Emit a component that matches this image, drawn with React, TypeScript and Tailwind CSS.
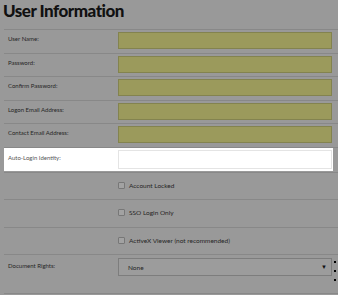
import React from "react";

const font = { fontFamily: "Lato, 'Open Sans', Arial, sans-serif" };

function InputRow({ label, h }: { label: string; h: string }) {
  return (
    <div className={`flex border-t border-[#888888] pl-[4px] ${h}`}>
      <div className="w-[110px] pt-[4px] text-[6px] leading-[9px] text-[#262626]">{label}</div>
      <div className="mt-[2px] h-[17px] w-[214px] border border-[#83834f] bg-[#9b9a5c]" />
    </div>
  );
}

function CheckRow({ label, h }: { label: string; h: string }) {
  return (
    <div className={`flex items-center border-t border-[#888888] pb-[2px] pl-[114px] ${h}`}>
      <div className="h-[7px] w-[7px] rounded-[1px] border border-[#777777] bg-[#a2a2a2]" />
      <span className="ml-[4px] text-[6.5px] leading-[9px] text-[#262626]">{label}</span>
    </div>
  );
}

export default function App() {
  return (
    <div className="h-[295px] w-[338px] overflow-hidden bg-[#999999]" style={font}>
      <div className="h-[29px] pl-[3px] pt-[1px] text-[17px] font-black leading-[20px] tracking-[-0.5px] text-[#111111]">
        User Information
      </div>
      <div className="pl-[4px]">
        <InputRow label="User Name:" h="h-[24px]" />
        <InputRow label="Password:" h="h-[23px]" />
        <InputRow label="Confirm Password:" h="h-[24px]" />
        <InputRow label="Logon Email Address:" h="h-[23px]" />
        <InputRow label="Contact Email Address:" h="h-[24px]" />
        <div className="border-t border-[#888888]">
          <div className="flex h-[23px] w-[329px] bg-white pl-[4px]">
            <div className="w-[110px] pt-[5px] text-[6px] leading-[9px] text-[#555555]">Auto-Login Identity:</div>
            <div className="mt-[2px] h-[19px] w-[214px] border border-[#e4e4e4] bg-white" />
          </div>
        </div>
        <div className="h-[1px]" />
        <CheckRow label="Account Locked" h="h-[27px]" />
        <CheckRow label="SSO Login Only" h="h-[28px]" />
        <CheckRow label="ActiveX Viewer (not recommended)" h="h-[27px]" />
        <div className="flex h-[39px] border-t border-[#888888] pl-[4px]">
          <div className="w-[110px] pt-[6px] text-[6px] leading-[9px] text-[#262626]">Document Rights:</div>
          <div className="mt-[3px] flex h-[18px] w-[214px] items-center justify-between border border-[#7d7d7d] bg-[#9c9c9c] pl-[9px] pr-[4px]">
            <span className="text-[6.5px] leading-[9px] text-[#262626]">None</span>
            <span className="text-[6px] leading-[8px] text-[#111111]">▼</span>
          </div>
          <div className="ml-[2px] flex flex-col pt-[6px]">
            <div className="h-[2px] w-[2px] bg-black" />
            <div className="mt-[7px] h-[2px] w-[2px] bg-black" />
            <div className="mt-[7px] h-[2px] w-[2px] bg-black" />
          </div>
        </div>
        <div className="border-t border-[#888888]" />
      </div>
    </div>
  );
}
